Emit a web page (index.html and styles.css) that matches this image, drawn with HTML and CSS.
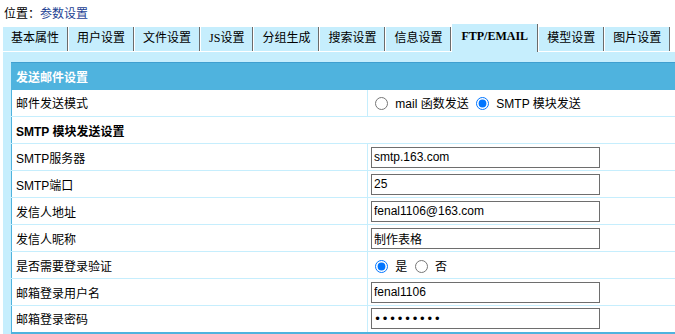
FILE: index.html
```html
<!DOCTYPE html>
<html lang="zh-CN">

<head>
    <meta charset="UTF-8">
    <title>参数设置</title>
    <link rel="stylesheet" href="styles.css">
</head>

<body>
    <div class="location">位置：<a href="#">参数设置</a></div>

    <div class="tabs">
        <div class="tab">基本属性</div>
        <div class="tab">用户设置</div>
        <div class="tab">文件设置</div>
        <div class="tab">JS设置</div>
        <div class="tab">分组生成</div>
        <div class="tab">搜索设置</div>
        <div class="tab">信息设置</div>
        <div class="tab active">FTP/EMAIL</div>
        <div class="tab">模型设置</div>
        <div class="tab">图片设置</div>
    </div>

    <div class="panel">
        <table class="form-table">
            <tr class="title-row">
                <td colspan="2">发送邮件设置</td>
            </tr>
            <tr>
                <td class="label">邮件发送模式</td>
                <td class="field">
                    <label><input type="radio" name="mode"> mail 函数发送</label>
                    <label><input type="radio" name="mode" checked> SMTP 模块发送</label>
                </td>
            </tr>
            <tr>
                <td class="label section" colspan="2">SMTP 模块发送设置</td>
            </tr>
            <tr>
                <td class="label">SMTP服务器</td>
                <td class="field"><input class="text" type="text" value="smtp.163.com"></td>
            </tr>
            <tr>
                <td class="label">SMTP端口</td>
                <td class="field"><input class="text" type="text" value="25"></td>
            </tr>
            <tr>
                <td class="label">发信人地址</td>
                <td class="field"><input class="text" type="text" value="fenal1106@163.com"></td>
            </tr>
            <tr>
                <td class="label">发信人昵称</td>
                <td class="field"><input class="text" type="text" value="制作表格"></td>
            </tr>
            <tr>
                <td class="label">是否需要登录验证</td>
                <td class="field">
                    <label><input type="radio" name="auth" checked> 是</label>
                    <label><input type="radio" name="auth"> 否</label>
                </td>
            </tr>
            <tr>
                <td class="label">邮箱登录用户名</td>
                <td class="field"><input class="text" type="text" value="fenal1106"></td>
            </tr>
            <tr>
                <td class="label">邮箱登录密码</td>
                <td class="field"><input class="text password" type="password" value="123456789"></td>
            </tr>
        </table>
    </div>
</body>

</html>
```

FILE: styles.css
```css
* {
    margin: 0;
    padding: 0;
    box-sizing: border-box;
}

body {
    font-family: "Liberation Sans", "Noto Sans CJK SC", sans-serif;
    font-size: 12px;
    color: #000;
    background: #fff;
    width: 700px;
    overflow: hidden;
}

.location {
    height: 24px;
    line-height: 28px;
    padding-left: 4px;
}

.location a {
    color: #1c3f94;
    text-decoration: none;
}

.tabs {
    display: flex;
    align-items: flex-end;
    height: 27px;
    padding-left: 3px;
    font-family: "Liberation Serif", "Noto Sans CJK SC", serif;
}

.tab {
    height: 24px;
    line-height: 23px;
    padding: 0 8px;
    background: #c6eefd;
    border-left: 1px solid #fff;
    border-right: 1px solid #6b6b6b;
    white-space: nowrap;
}

.tab:first-child {
    border-left: none;
}

.tab.active {
    height: 28px;
    margin-bottom: -1px;
    line-height: 24px;
    padding: 0 9px;
    font-weight: bold;
}

.panel {
    margin: 1px 0 0 3px;
    padding: 10px 0 0 8px;
    background: #c6eefd;
    height: 290px;
}

.form-table {
    width: 690px;
    border-collapse: collapse;
    background: #fff;
    border-top: 1px solid #3f9fd0;
    border-left: 1px solid #4fb3de;
    border-bottom: 2px solid #4fb3de;
}

.form-table td {
    height: 27px;
    border-bottom: 1px solid #c6eefd;
    vertical-align: middle;
}

.title-row td {
    height: 27px;
    background: #4fb3de;
    color: #fff;
    font-weight: bold;
    padding-left: 4px;
    border-bottom: none;
}

.label {
    width: 356px;
    padding-left: 4px;
    border-right: 1px solid #c6eefd;
}

.label.section {
    font-weight: bold;
    border-right: none;
}

.field {
    padding-left: 3px;
}

.field input[type="radio"] {
    width: 13px;
    height: 13px;
    margin: 0 4px 0 4px;
    vertical-align: -2px;
}

.text {
    width: 229px;
    height: 21px;
    padding: 0 2px;
    border: 1px solid #6e6e6e;
    font-family: "Liberation Sans", "Noto Sans CJK SC", sans-serif;
    font-size: 12px;
    color: #000;
    outline: none;
}

.text.password {
    font-family: "DejaVu Sans", sans-serif;
    letter-spacing: 0.4px;
}
```
